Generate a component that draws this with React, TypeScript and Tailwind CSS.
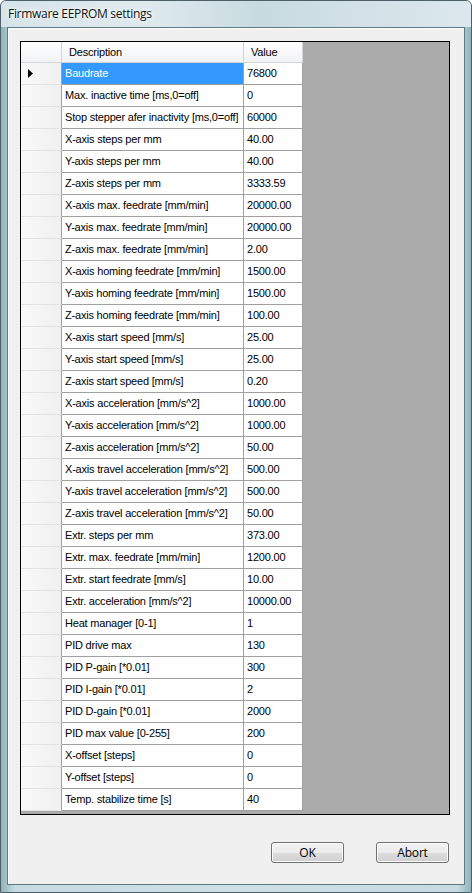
const rows: [string, string][] = [
  ['Baudrate', '76800'],
  ['Max. inactive time [ms,0=off]', '0'],
  ['Stop stepper afer inactivity [ms,0=off]', '60000'],
  ['X-axis steps per mm', '40.00'],
  ['Y-axis steps per mm', '40.00'],
  ['Z-axis steps per mm', '3333.59'],
  ['X-axis max. feedrate [mm/min]', '20000.00'],
  ['Y-axis max. feedrate [mm/min]', '20000.00'],
  ['Z-axis max. feedrate [mm/min]', '2.00'],
  ['X-axis homing feedrate [mm/min]', '1500.00'],
  ['Y-axis homing feedrate [mm/min]', '1500.00'],
  ['Z-axis homing feedrate [mm/min]', '100.00'],
  ['X-axis start speed [mm/s]', '25.00'],
  ['Y-axis start speed [mm/s]', '25.00'],
  ['Z-axis start speed [mm/s]', '0.20'],
  ['X-axis acceleration [mm/s^2]', '1000.00'],
  ['Y-axis acceleration [mm/s^2]', '1000.00'],
  ['Z-axis acceleration [mm/s^2]', '50.00'],
  ['X-axis travel acceleration [mm/s^2]', '500.00'],
  ['Y-axis travel acceleration [mm/s^2]', '500.00'],
  ['Z-axis travel acceleration [mm/s^2]', '50.00'],
  ['Extr. steps per mm', '373.00'],
  ['Extr. max. feedrate [mm/min]', '1200.00'],
  ['Extr. start feedrate [mm/s]', '10.00'],
  ['Extr. acceleration [mm/s^2]', '10000.00'],
  ['Heat manager [0-1]', '1'],
  ['PID drive max', '130'],
  ['PID P-gain [*0.01]', '300'],
  ['PID I-gain [*0.01]', '2'],
  ['PID D-gain [*0.01]', '2000'],
  ['PID max value [0-255]', '200'],
  ['X-offset [steps]', '0'],
  ['Y-offset [steps]', '0'],
  ['Temp. stabilize time [s]', '40'],
]

const Button = ({ label }: { label: string }) => (
  <button className="w-[73px] h-[21px] rounded-[3px] border border-[#707070] bg-[linear-gradient(#f2f2f2_0%,#ebebeb_50%,#dddddd_51%,#cfcfcf_100%)] text-[12px] leading-[19px] text-black font-['Open_Sans',sans-serif] tracking-[-0.2px] shadow-[inset_0_0_0_1px_#fcfcfc]">
    {label}
  </button>
)

export default function App() {
  return (
    <div className="w-[472px] h-[893px] flex flex-col rounded-t-[6px] border border-[#4d5f68] bg-[linear-gradient(90deg,#8fb3ba_0%,#c6dbe2_3%,#cfdfe6_50%,#c6dbe2_97%,#8fb3ba_100%)] overflow-hidden">
      <div className="h-[26px] flex items-center pl-[7px] bg-[linear-gradient(90deg,#d6e4ea_0%,#dfeaee_30%,#c8dbe1_55%,#d3e2e8_80%,#dce8ed_100%)]">
        <span className="text-[12px] text-[#111] font-['Open_Sans',sans-serif] tracking-[-0.3px] [text-shadow:0_0_6px_#ffffff,0_0_3px_#ffffff]">
          Firmware EEPROM settings
        </span>
      </div>
      <div className="flex-1 mx-[6px] mb-[7px] border border-[#5f7780] bg-[#f0f0f0] shadow-[inset_1px_1px_0_#ffffff] flex flex-col">
        <div className="pt-[13px] pl-[12px]">
          <div className="w-[430px] h-[774px] border border-black bg-[#ababab] font-['Liberation_Sans',sans-serif] text-[11px] tracking-[-0.2px] text-black">
            <div className="flex h-[21px]">
              <div className="w-[41px] border-r border-b border-[#d5d5d5] bg-[linear-gradient(#ffffff,#f1f2f4)]" />
              <div className="w-[182px] border-r border-b border-[#d5d5d5] bg-[linear-gradient(#ffffff,#f1f2f4)] pl-[7px] leading-[20px]">
                Description
              </div>
              <div className="w-[59px] border-r border-b border-[#d5d5d5] bg-[linear-gradient(#ffffff,#f1f2f4)] pl-[7px] leading-[20px]">
                Value
              </div>
            </div>
            {rows.map(([desc, value], i) => (
              <div key={desc} className="flex h-[22px]">
                <div className="w-[41px] border-r border-b border-r-[#a0a0a0] border-b-[#e2e2e2] bg-[linear-gradient(90deg,#f9f9f9,#f0f0f0)] flex items-center pl-[7px]">
                  {i === 0 && (
                    <svg width="5" height="9" viewBox="0 0 5 9">
                      <path d="M0 0 L5 4.5 L0 9 Z" fill="#000" />
                    </svg>
                  )}
                </div>
                <div
                  className={
                    i === 0
                      ? 'w-[182px] border-r border-b border-[#a0a0a0] bg-[#3399ff] text-white pl-[3px] leading-[21px] whitespace-nowrap overflow-hidden'
                      : 'w-[182px] border-r border-b border-[#a0a0a0] bg-white pl-[3px] leading-[21px] whitespace-nowrap overflow-hidden'
                  }
                >
                  {desc}
                </div>
                <div className="w-[59px] border-r border-b border-[#a0a0a0] bg-white pl-[3px] leading-[21px]">
                  {value}
                </div>
              </div>
            ))}
          </div>
        </div>
        <div className="flex justify-end gap-[32px] pr-[15px] pt-[27px]">
          <Button label="OK" />
          <Button label="Abort" />
        </div>
      </div>
    </div>
  )
}
